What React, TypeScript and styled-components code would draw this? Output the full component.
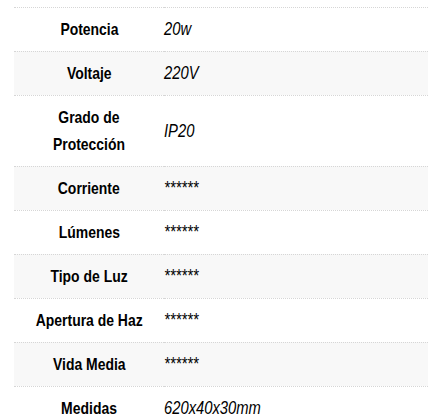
import React from "react";
import styled, { createGlobalStyle } from "styled-components";

const Global = createGlobalStyle`
  html, body { margin: 0; padding: 0; background: #fff; overflow: hidden; }
  body { font-family: "Liberation Sans", Arial, sans-serif; color: #000; }
`;

const Wrapper = styled.div`
  padding: 7px 0 0 14px;
  width: 428px;
  box-sizing: border-box;
`;

const Table = styled.div`
  display: grid;
  grid-template-columns: 150px 1fr;
  width: 100%;
`;

const Row = styled.div<{ $striped: boolean; $tall?: boolean }>`
  display: contents;
  & > div {
    background: ${(p) => (p.$striped ? "#f8f8f8" : "#ffffff")};
    border-top: 1px dotted #d6d6d6;
    min-height: ${(p) => (p.$tall ? 70 : 44)}px;
  }
`;

const Label = styled.div`
  display: flex;
  align-items: center;
  justify-content: center;
  text-align: center;
  font-weight: 700;
  font-size: 17px;
  line-height: 27px;
  padding: 8px 0;
  box-sizing: border-box;
  white-space: nowrap;
`;

const Value = styled.div`
  display: flex;
  align-items: center;
  font-style: italic;
  font-size: 18px;
  line-height: 27px;
  padding: 8px 0;
  box-sizing: border-box;
  white-space: nowrap;
`;

const Narrow = styled.span<{ $origin: string }>`
  display: inline-block;
  transform: scaleX(0.82);
  transform-origin: ${(p) => p.$origin};
`;

const rows: { label: React.ReactNode; value: string; tall?: boolean }[] = [
  { label: "Potencia", value: "20w" },
  { label: "Voltaje", value: "220V" },
  { label: <>Grado de<br />Protección</>, value: "IP20", tall: true },
  { label: "Corriente", value: "******" },
  { label: "Lúmenes", value: "******" },
  { label: "Tipo de Luz", value: "******" },
  { label: "Apertura de Haz", value: "******" },
  { label: "Vida Media", value: "******" },
  { label: "Medidas", value: "620x40x30mm" },
];

export default function App() {
  return (
    <>
      <Global />
      <Wrapper>
        <Table>
          {rows.map((r, i) => (
            <Row key={i} $striped={i % 2 === 1} $tall={r.tall}>
              <Label>
                <Narrow $origin="center">{r.label}</Narrow>
              </Label>
              <Value>
                <Narrow $origin="left">{r.value}</Narrow>
              </Value>
            </Row>
          ))}
        </Table>
      </Wrapper>
    </>
  );
}
